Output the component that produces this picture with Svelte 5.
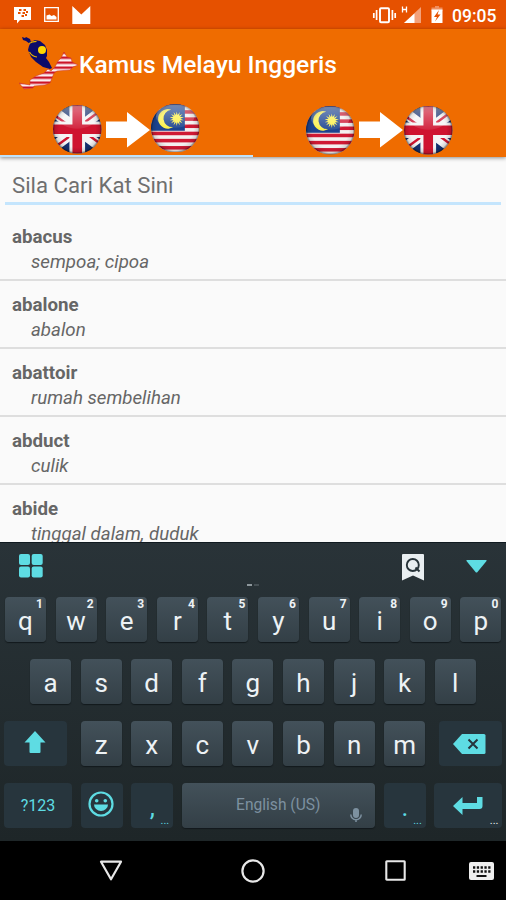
<script>
	const entries = [
		{ word: "abacus", meaning: "sempoa; cipoa" },
		{ word: "abalone", meaning: "abalon" },
		{ word: "abattoir", meaning: "rumah sembelihan" },
		{ word: "abduct", meaning: "culik" },
		{ word: "abide", meaning: "tinggal dalam, duduk" }
	];

	const topRow = [..."qwertyuiop"];
	const homeRow = [..."asdfghjkl"];
	const bottomRow = [..."zxcvbnm"];

	let search = $state("");
	let activeTab = $state(0);

	// star on the Malaysian flag, 14 points
	const star = Array.from({ length: 28 }, (_, i) => {
		const r = i % 2 ? 3.6 : 7.2;
		const a = (i * Math.PI) / 14;
		return `${(25.5 + r * Math.sin(a)).toFixed(2)},${(14.5 - r * Math.cos(a)).toFixed(2)}`;
	}).join(" ");
</script>

{#snippet gloss(id)}
	<circle cx="24" cy="24" r="24" fill="url(#{id}-edge)" />
	<ellipse cx="24" cy="12" rx="19" ry="11.5" fill="url(#{id}-shine)" />
{/snippet}

{#snippet defs(id)}
	<defs>
		<clipPath id="{id}-clip"><circle cx="24" cy="24" r="24" /></clipPath>
		<radialGradient id="{id}-edge">
			<stop offset="0.75" stop-color="#000" stop-opacity="0" />
			<stop offset="0.92" stop-color="#000" stop-opacity="0.12" />
			<stop offset="1" stop-color="#000" stop-opacity="0.5" />
		</radialGradient>
		<linearGradient id="{id}-shine" x2="0" y2="1">
			<stop offset="0" stop-color="#fff" stop-opacity="0.4" />
			<stop offset="1" stop-color="#fff" stop-opacity="0.08" />
		</linearGradient>
	</defs>
{/snippet}

{#snippet ukFlag(id)}
	<svg class="flag" viewBox="0 0 48 48">
		{@render defs(id)}
		<g clip-path="url(#{id}-clip)">
			<rect width="48" height="48" fill="#15306f" />
			<path d="M-8 0 56 48M56 0-8 48" stroke="#f4f4f4" stroke-width="10.500" />
			<path d="M-8 3 22 25M56 -1 26 21M-8 49 22 27M56 45 26 23" stroke="#cf1430" stroke-width="2.400" />
			<path d="M24 0v48M0 24h48" stroke="#f4f4f4" stroke-width="15.500" />
			<path d="M24 0v48M0 24h48" stroke="#cf1430" stroke-width="9.500" />
		</g>
		{@render gloss(id)}
	</svg>
{/snippet}

{#snippet myFlag(id)}
	<svg class="flag" viewBox="0 0 48 48">
		{@render defs(id)}
		<g clip-path="url(#{id}-clip)">
			<rect width="48" height="48" fill="#f4f0f0" />
			{#each Array(7) as _, i}
				<rect y={-1 + i * 7.1} width="48" height="3.5" fill="#cf1934" />
			{/each}
			<rect width="33.5" height="26.5" fill="#1c438f" />
			<path d="M20 5.600a9.700 9.700 0 1 0 2 17.200A8.600 8.600 0 1 1 20 5.600z" fill="#fbf04c" />
			<polygon points={star} fill="#fbf04c" />
		</g>
		{@render gloss(id)}
	</svg>
{/snippet}

{#snippet arrow()}
	<svg class="arrow" viewBox="0 0 44 36"><path d="M0 9.500h21V0l23 18-23 17.500V26H0z" fill="#fff" /></svg>
{/snippet}

<div class="phone">
	<div class="status">
		<svg class="notices" width="92" height="20" viewBox="0 0 92 20">
			<path d="M14 2h17v13H20l-3 3.500V15h-3z" fill="#fff" />
			<path d="M19 5h2.500M23.500 5H26M18 8h2.500M22.500 8H25M21.500 11H24M26 7h2M25 10h2" stroke="#e65100" stroke-width="1.900" />
			<path d="M44.700 2.700h13.600v13.600H44.700z" fill="none" stroke="#fff" stroke-width="1.300" />
			<path d="M46.500 14.500v-4l3-1 2 1.500 2.500-1 2.500 2v2.500z" fill="#fff" />
			<path d="M72.300 1l9 8.500 9-8.500v18h-18z" fill="#fff" />
		</svg>
		<svg class="indicators" width="74" height="20" viewBox="0 0 74 20">
			<rect x="10" y="3.200" width="9" height="14" rx="1" fill="none" stroke="#fff" stroke-width="1.900" />
			<path d="M6.600 5v10M22.400 5v10M3.800 8v5M25.200 8v5" stroke="#fff" stroke-width="1.700" />
			<path d="M32.500 1.500v6M36.500 1.500v6M32.500 4.500h4" stroke="#fff" stroke-width="1.300" />
			<path d="M51 2v16H34z" fill="#f3a17a" />
			<path d="M44.500 8.500V18H34z" fill="#fff" />
			<path d="M65 1h4v1.500h3.500V6h-11V2.500H65z" fill="#f08f5f" />
			<path d="M61.500 4.500h11V18h-11z" fill="#fff" />
			<path d="M69 5l-5 7h3l-2 4.500 5.500-7h-3z" fill="#e65100" />
		</svg>
		<span>09:05</span>
	</div>

	<header>
		<div class="title">
			<svg width="60" height="56" viewBox="19 35 60 56">
				<defs>
					<pattern id="stripes" width="10" height="5" y="1.500" patternUnits="userSpaceOnUse">
						<rect width="10" height="5" fill="#fbeef0" />
						<rect width="10" height="2.400" fill="#cc1428" />
					</pattern>
				</defs>
				<path d="M22 37l3 1 1-1 4 2 1 3 4-2 5 1 5 4 2 5v6l-1 2 3 4 3 6-2 1-7-2-7-5-5-5-3-7 1-4 1-2-4-3-3-1z" fill="#0c0b69" />
				<path d="M29 43.500l4-1.700 3.500-.500M29.500 52q2.500 4.500 7.500 5" stroke="#e8b400" stroke-width="1.200" fill="none" />
				<circle cx="42" cy="50" r="4" fill="#ffd800" />
				<path d="M48 69l3 2 4-4 3-6 3-3 3-6 3 5 4 1 1 4 6 3-5 2-3 3-13 1-3 2-2 5-2 5-5 2-11 1-1 2-9 1-5-6 11 2v-5l6-4 8-3z" fill="url(#stripes)" stroke="#cf3024" stroke-width="0.500" />
			</svg>
			<h1>Kamus Melayu Inggeris</h1>
		</div>
		<div class="tabs">
			<button class:active={activeTab === 0} onclick={() => (activeTab = 0)}>
				{@render ukFlag("uk1")}
				{@render arrow()}
				{@render myFlag("my1")}
			</button>
			<button class:active={activeTab === 1} onclick={() => (activeTab = 1)}>
				{@render myFlag("my2")}
				{@render arrow()}
				{@render ukFlag("uk2")}
			</button>
		</div>
	</header>

	<main>
		<input type="text" placeholder="Sila Cari Kat Sini" bind:value={search} />
		{#each entries as entry}
			<div class="entry">
				<b>{entry.word}</b>
				<i>{entry.meaning}</i>
			</div>
		{/each}
	</main>

	<div class="keyboard">
		<div class="toolbar">
			<svg width="24" height="24" viewBox="0 0 24 24" fill="#5edce3">
				<rect width="11" height="11" rx="2" /><rect x="12.700" width="11" height="11" rx="2" />
				<rect y="12.500" width="11" height="11" rx="2" /><rect x="12.700" y="12.500" width="11" height="11" rx="2" />
			</svg>
			<div class="dashes"><span></span><span></span></div>
			<svg width="22" height="27" viewBox="0 0 22 27">
				<path d="M1 0h20a1 1 0 0 1 1 1v25.500l-11-5-11 5V1A1 1 0 0 1 1 0z" fill="#e9eef1" />
				<circle cx="10.800" cy="11" r="6" fill="none" stroke="#263238" stroke-width="1.900" />
				<path d="M13.500 13.500l4 4" stroke="#263238" stroke-width="2" />
			</svg>
			<svg class="collapse" width="21" height="13" viewBox="0 0 21 13"><path d="M1 0h19q1 0 .500 1L11.500 12q-1 1-2 0L.500 1Q0 0 1 0z" fill="#5edce3" /></svg>
		</div>

		<div class="row">
			{#each topRow as key, i}
				<button class="key">{key}<sup>{(i + 1) % 10}</sup></button>
			{/each}
		</div>
		<div class="row home">
			{#each homeRow as key}
				<button class="key">{key}</button>
			{/each}
		</div>
		<div class="row bottom">
			<button class="key dark shift" aria-label="Shift">
				<svg width="22" height="22" viewBox="0 0 22 22"><path d="M11 0l10.500 11.500h-5V21q0 1-1 1h-9q-1 0-1-1v-9.500h-5z" fill="#5edce3" /></svg>
			</button>
			{#each bottomRow as key}
				<button class="key">{key}</button>
			{/each}
			<button class="key dark erase" aria-label="Delete">
				<svg width="33" height="20" viewBox="0 0 33 20">
					<path d="M9 0h22q1.500 0 1.500 1.500v17q0 1.500-1.500 1.500H9L0 10z" fill="#5edce3" />
					<path d="M15.500 5.500l9 9M24.500 5.500l-9 9" stroke="#26343c" stroke-width="2" />
				</svg>
			</button>
		</div>
		<div class="row last">
			<button class="key dark symbols">?123</button>
			<button class="key dark emoji" aria-label="Emoji">
				<svg width="26" height="26" viewBox="0 0 26 26" fill="#5edce3">
					<circle cx="13" cy="13" r="11.500" fill="none" stroke="#5edce3" stroke-width="2.200" />
					<circle cx="8.700" cy="9.800" r="1.800" /><circle cx="17.300" cy="9.800" r="1.800" />
					<path d="M6 13.500h14a7 6.500 0 0 1-14 0z" />
				</svg>
			</button>
			<button class="key dark mark">,<small>...</small></button>
			<button class="key space">
				English (US)
				<svg width="12" height="14" viewBox="0 0 12 14">
					<rect x="3" width="6" height="10" rx="3" fill="#7d91a0" />
					<path d="M.800 6.500a5.200 5.200 0 0 0 10.400 0M6 11.500V14" fill="none" stroke="#7d91a0" stroke-width="1.500" />
				</svg>
			</button>
			<button class="key dark mark period">.<small>...</small></button>
			<button class="key dark enter" aria-label="Enter">
				<svg width="30" height="18" viewBox="0 0 30 18"><path d="M0 9l9.500-9v6H24V0h5.500v9q0 3-3 3h-17v6z" fill="#5edce3" /></svg>
				<small>...</small>
			</button>
		</div>
	</div>

	<nav>
		<svg width="24" height="22" viewBox="0 0 24 22"><path d="M2 1.700h20L12 19.300z" fill="none" stroke="#e8e8e8" stroke-width="2.200" stroke-linejoin="round" /></svg>
		<svg width="24" height="24" viewBox="0 0 24 24"><circle cx="12" cy="12" r="10.600" fill="none" stroke="#e8e8e8" stroke-width="2.200" /></svg>
		<svg width="21" height="21" viewBox="0 0 21 21"><rect x="1.300" y="1.300" width="18.400" height="18.400" rx="0.500" fill="none" stroke="#e8e8e8" stroke-width="2.100" /></svg>
		<svg width="25" height="18" viewBox="0 0 25 18">
			<rect width="25" height="18" rx="2" fill="#eee" />
			<path d="M4 5.500h17.500M4 9.500h17.500" stroke="#111" stroke-width="2.300" stroke-dasharray="2.300 1.500" />
			<path d="M7.500 14h10" stroke="#111" stroke-width="2" />
		</svg>
	</nav>
</div>

<style>
	:global(body) {
		margin: 0;
		background: #000;
	}

	.phone {
		width: 506px;
		height: 900px;
		overflow: hidden;
		display: flex;
		flex-direction: column;
		background: #fafafa;
		font-family: Roboto, sans-serif;
	}

	button {
		border: 0;
		padding: 0;
		background: none;
		font-family: inherit;
	}

	svg {
		display: block;
		flex: none;
	}

	.status {
		flex: none;
		height: 29px;
		box-sizing: border-box;
		padding: 5px 10px 0 0;
		display: flex;
		background: #e65100;
		color: #fff;
	}
	.indicators {
		margin-left: auto;
	}
	.status span {
		width: 44px;
		margin-left: 8px;
		font-size: 17.500px;
		font-weight: 500;
		line-height: 22px;
		white-space: nowrap;
	}

	header {
		flex: none;
		height: 128px;
		background: #ef6c00;
		box-shadow: 0 1px 4px rgba(0, 0, 0, 0.45);
		z-index: 1;
	}
	.title {
		height: 73px;
		padding-left: 19px;
		display: flex;
		align-items: center;
	}
	.title svg {
		margin-top: -5px;
	}
	h1 {
		margin: -2px 0 0;
		color: #fff;
		font-size: 24.600px;
		font-weight: 500;
		white-space: nowrap;
	}
	.tabs {
		display: grid;
		grid-template-columns: 1fr 1fr;
		height: 55px;
	}
	.tabs button {
		display: flex;
		align-items: flex-start;
		padding: 4px 0 0 53px;
	}
	.tabs button.active {
		padding-top: 3px;
		box-shadow: inset 0 -2px #bfe3fb;
	}
	.flag {
		width: 48.500px;
		height: 48.500px;
	}
	.arrow {
		width: 44px;
		height: 36px;
		margin: 6px 1.500px 0 4px;
	}
	.active .arrow {
		margin-top: 7px;
	}
	.active .flag:last-child {
		margin-top: -1.500px;
	}

	main {
		height: 385px;
		overflow: hidden;
	}
	input {
		display: block;
		box-sizing: border-box;
		width: 496px;
		height: 48px;
		margin: 0 5px 8px;
		padding: 11px 7px 0;
		border: 0;
		border-bottom: 3px solid #c4e5fd;
		background: none;
		font: 22.200px Roboto, sans-serif;
		outline: none;
	}
	input::placeholder {
		color: #6f6f6f;
		opacity: 1;
	}
	.entry {
		box-sizing: border-box;
		height: 68px;
		padding: 12px 12px 0;
		border-bottom: 2px solid #dedede;
		color: #666;
		font-size: 18.700px;
		line-height: 25px;
	}
	.entry b,
	.entry i {
		display: block;
	}
	.entry i {
		padding-left: 19px;
	}

	.keyboard {
		flex: none;
		height: 299px;
		box-sizing: border-box;
		border-top: 1px solid #101a20;
		background: linear-gradient(#293338, #1e2628);
	}
	.toolbar {
		box-sizing: border-box;
		height: 54px;
		display: flex;
		align-items: flex-start;
		padding: 11px 19px 0;
	}
	.dashes {
		display: flex;
		gap: 2px;
		margin: 30px 143px 0 204px;
	}
	.dashes span {
		width: 5px;
		height: 2px;
		background: #8d979c;
	}
	.dashes span + span {
		background: #454f54;
	}
	.collapse {
		margin: 6px 0 0 41.500px;
	}

	.row {
		display: flex;
		gap: 9.600px;
		height: 62px;
		padding-left: 5px;
	}
	.row.home {
		padding-left: 30px;
	}
	.row.bottom {
		padding-left: 4px;
	}
	.row.last {
		padding-left: 4px;
		gap: 8.600px;
	}
	.key {
		position: relative;
		flex: none;
		width: 41px;
		height: 45px;
		border-radius: 4px;
		background: linear-gradient(#43515a, #333f46);
		box-shadow: 0 1px 1px #12191c;
		color: #edf2f5;
		font-size: 26px;
		line-height: 48px;
		text-align: center;
	}
	.key sup {
		position: absolute;
		top: 1px;
		right: 3px;
		font-size: 12px;
		font-weight: 700;
		line-height: 13px;
	}
	.key svg {
		margin: auto;
	}
	.dark {
		background: #27353d;
		box-shadow: none;
		color: #5edce3;
	}
	.shift,
	.erase {
		width: 63px;
	}
	.shift {
		margin-right: 4px;
	}
	.shift svg {
		margin-top: -4px;
		margin-left: 20px;
	}
	.erase {
		margin-left: 4px;
	}
	.erase svg {
		margin-left: 14px;
	}
	.symbols,
	.enter {
		width: 68px;
	}
	.symbols {
		font-size: 16px;
		line-height: 45px;
	}
	.emoji,
	.mark {
		width: 42px;
	}
	.emoji svg {
		margin: -3px 0 0 7.500px;
	}
	.period {
		margin-left: 0.500px;
	}
	.mark small,
	.enter small {
		position: absolute;
		right: 4px;
		bottom: 3px;
		font-size: 11px;
		line-height: 9px;
	}
	.enter small {
		color: #edf2f5;
	}
	.enter svg {
		margin-left: 19px;
	}
	.space {
		width: 193px;
		color: #7d91a0;
		font-size: 15.600px;
		line-height: 45px;
	}
	.space svg {
		position: absolute;
		right: 13px;
		bottom: 6px;
	}

	nav {
		flex: none;
		height: 59px;
		display: flex;
		align-items: center;
		padding-left: 99px;
		background: #000;
	}
	nav svg:nth-child(2) {
		margin-left: 118px;
	}
	nav svg:nth-child(3) {
		margin-left: 120px;
	}
	nav svg:nth-child(4) {
		margin-left: 63px;
	}
</style>
